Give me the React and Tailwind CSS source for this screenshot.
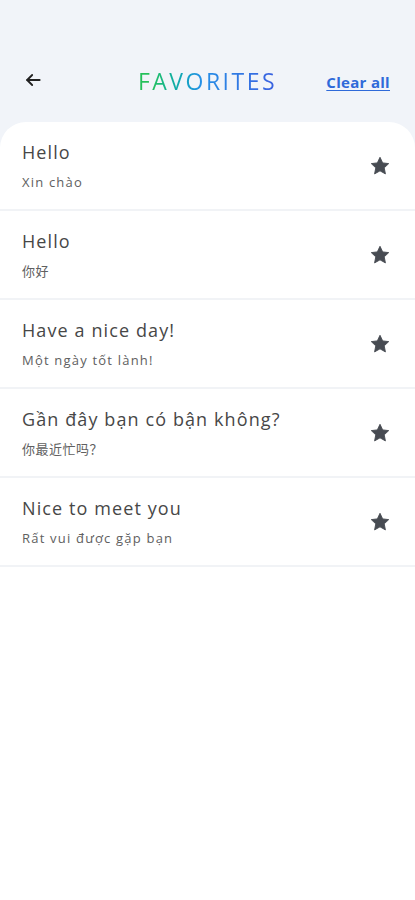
import React from "react";

const items = [
  ["Hello", "Xin chào", false],
  ["Hello", "你好", true],
  ["Have a nice day!", "Một ngày tốt lành!", false],
  ["Gần đây bạn có bận không?", "你最近忙吗？", true],
  ["Nice to meet you", "Rất vui được gặp bạn", false],
];

function Star() {
  return (
    <svg width="22" height="22" viewBox="0 0 24 24">
      <path
        d="M12 2.5l2.9 6.1 6.6.8-4.9 4.6 1.3 6.6L12 17.3l-5.9 3.3 1.3-6.6-4.9-4.6 6.6-.8z"
        fill="#474b52"
        strokeLinejoin="round"
        stroke="#474b52"
        strokeWidth="1"
      />
    </svg>
  );
}

export default function App() {
  return (
    <div
      className="w-[415px] h-[900px] bg-[#f1f4f9] flex flex-col"
      style={{ fontFamily: '"Open Sans", "Noto Sans CJK SC", sans-serif' }}
    >
      <div className="h-[122px] flex items-center px-[22px] pt-[38px] relative">
        <svg width="20" height="20" viewBox="0 0 24 24" fill="none" stroke="#222" strokeWidth="2.2" strokeLinecap="round" strokeLinejoin="round" className="ml-[1px]">
          <path d="M20 12H5" />
          <path d="M11 6l-6 6 6 6" />
        </svg>
        <div className="absolute left-0 right-0 top-[64px] flex justify-center pointer-events-none">
          <span className="text-[23px] tracking-[2.5px] bg-gradient-to-r from-[#25c05a] from-[10%] via-[#2490e6] via-[45%] to-[#3a5fe0] bg-clip-text text-transparent font-medium">
            FAVORITES
          </span>
        </div>
        <span className="ml-auto mr-[3px] mt-[4px] text-[15px] font-bold text-[#2f6ad9] underline underline-offset-2 tracking-[0.3px]">
          Clear all
        </span>
      </div>
      <div className="flex-1 bg-white rounded-t-[26px]">
        {items.map(([t, s, cjk], i) => (
          <div
            key={i}
            className="h-[89px] flex items-center pl-[22px] pr-[24px] border-b-2 border-[#f1f3f6]"
          >
            <div className="flex-1 flex flex-col">
              <span className="text-[18px] text-[#474747] leading-[24px] tracking-[1.1px]">{t}</span>
              <span
                className={
                  cjk
                    ? "text-[13px] text-[#606060] leading-[18px] mt-[9px] tracking-[0.5px] font-['Noto_Sans_CJK_SC']"
                    : "text-[13px] text-[#606060] leading-[18px] mt-[9px] tracking-[1.2px]"
                }
              >
                {s}
              </span>
            </div>
            <Star />
          </div>
        ))}
      </div>
    </div>
  );
}
